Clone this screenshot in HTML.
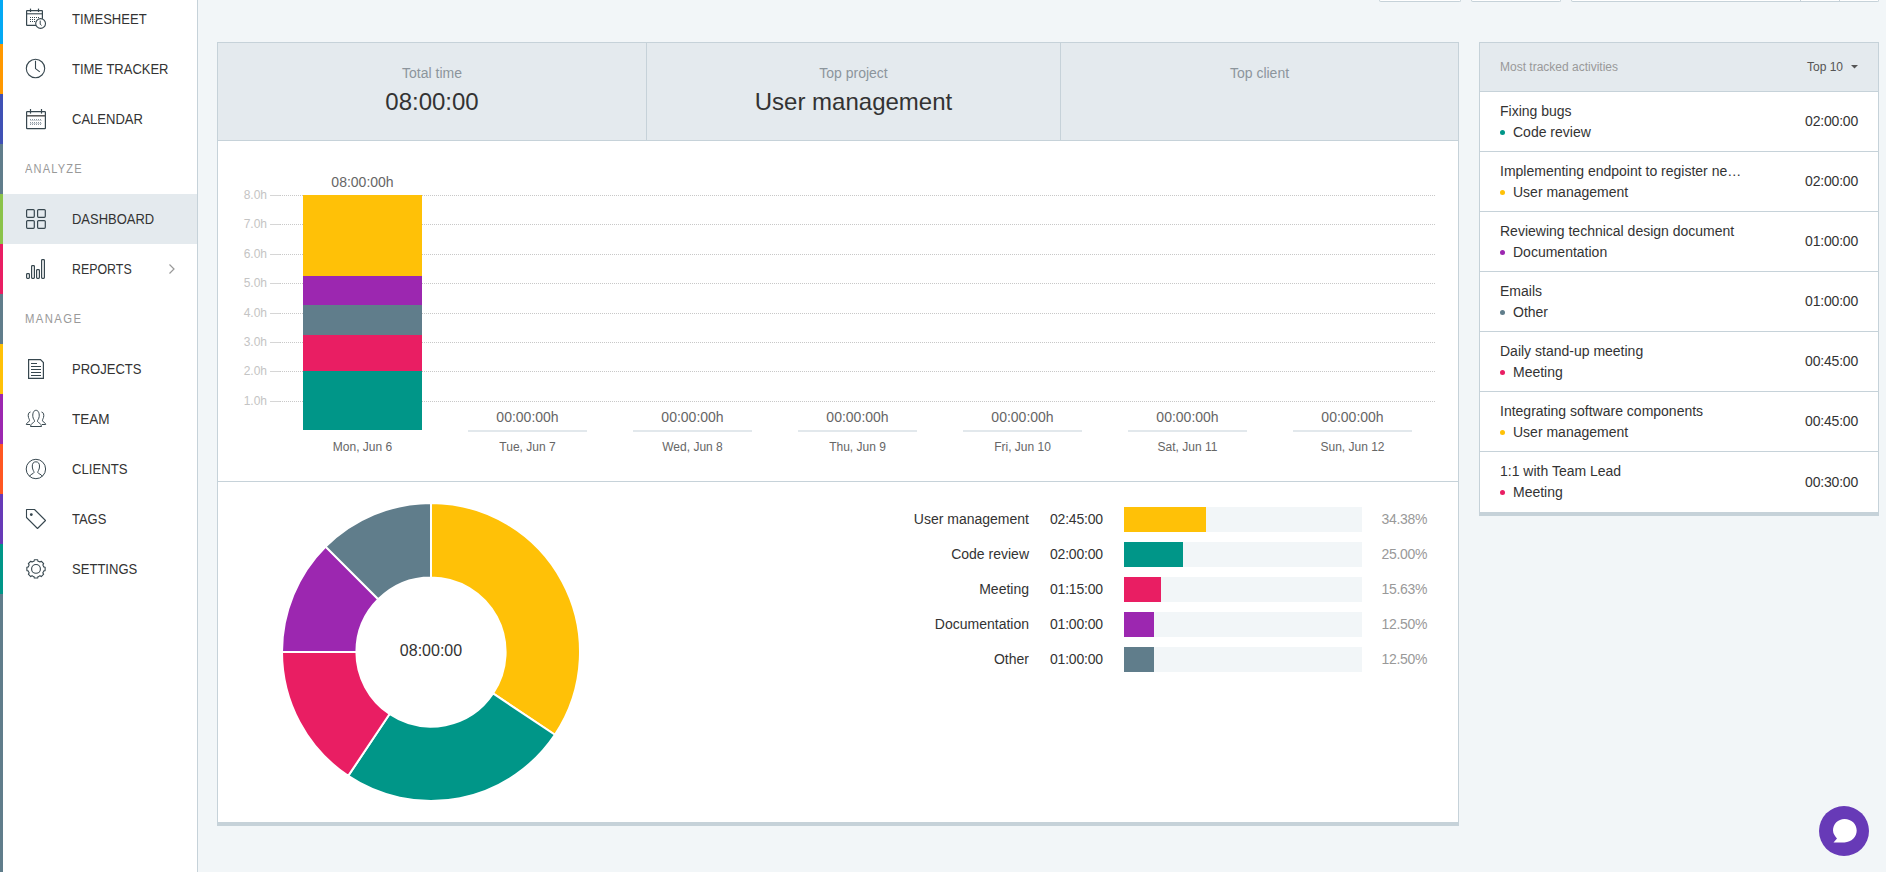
<!DOCTYPE html>
<html><head><meta charset="utf-8"><style>
html,body{margin:0;padding:0;width:1886px;height:872px;overflow:hidden;position:relative;font-family:"Liberation Sans", sans-serif;}
.t{position:absolute;white-space:nowrap;font-family:"Liberation Sans", sans-serif;}
.r{position:absolute;}
</style></head><body>
<div class="r" style="left:0px;top:0px;width:1886px;height:872px;background:#f2f6f8;"></div>
<div class="r" style="left:0px;top:0px;width:197px;height:872px;background:#fff;"></div>
<div class="r" style="left:197px;top:0px;width:1px;height:872px;background:#c6d2d9;"></div>
<div class="r" style="left:0px;top:0px;width:3px;height:44px;background:#03a9f4;"></div>
<div class="r" style="left:0px;top:44px;width:3px;height:50px;background:#ff9800;"></div>
<div class="r" style="left:0px;top:94px;width:3px;height:50px;background:#3f51b5;"></div>
<div class="r" style="left:0px;top:144px;width:3px;height:50px;background:#607d8b;"></div>
<div class="r" style="left:0px;top:194px;width:3px;height:50px;background:#8bc34a;"></div>
<div class="r" style="left:0px;top:244px;width:3px;height:50px;background:#e91e63;"></div>
<div class="r" style="left:0px;top:294px;width:3px;height:50px;background:#607d8b;"></div>
<div class="r" style="left:0px;top:344px;width:3px;height:50px;background:#ffc107;"></div>
<div class="r" style="left:0px;top:394px;width:3px;height:50px;background:#9c27b0;"></div>
<div class="r" style="left:0px;top:444px;width:3px;height:50px;background:#ff5722;"></div>
<div class="r" style="left:0px;top:494px;width:3px;height:50px;background:#673ab7;"></div>
<div class="r" style="left:0px;top:544px;width:3px;height:50px;background:#009688;"></div>
<div class="r" style="left:0px;top:594px;width:3px;height:278px;background:#607d8b;"></div>
<div class="r" style="left:3px;top:194px;width:194px;height:50px;background:#e4eaee;"></div>
<div class="t" style="left:72px;top:12px;font-size:14px;line-height:14px;color:#333;transform:scaleX(0.932);transform-origin:0 0">TIMESHEET</div>
<div class="t" style="left:72px;top:62px;font-size:14px;line-height:14px;color:#333;transform:scaleX(0.928);transform-origin:0 0">TIME TRACKER</div>
<div class="t" style="left:72px;top:112px;font-size:14px;line-height:14px;color:#333;transform:scaleX(0.931);transform-origin:0 0">CALENDAR</div>
<div class="t" style="left:72px;top:212px;font-size:14px;line-height:14px;color:#333;transform:scaleX(0.926);transform-origin:0 0">DASHBOARD</div>
<div class="t" style="left:72px;top:262px;font-size:14px;line-height:14px;color:#333;transform:scaleX(0.885);transform-origin:0 0">REPORTS</div>
<div class="t" style="left:72px;top:362px;font-size:14px;line-height:14px;color:#333;transform:scaleX(0.93);transform-origin:0 0">PROJECTS</div>
<div class="t" style="left:72px;top:412px;font-size:14px;line-height:14px;color:#333;transform:scaleX(0.968);transform-origin:0 0">TEAM</div>
<div class="t" style="left:72px;top:462px;font-size:14px;line-height:14px;color:#333;transform:scaleX(0.938);transform-origin:0 0">CLIENTS</div>
<div class="t" style="left:72px;top:512px;font-size:14px;line-height:14px;color:#333;transform:scaleX(0.924);transform-origin:0 0">TAGS</div>
<div class="t" style="left:72px;top:562px;font-size:14px;line-height:14px;color:#333;transform:scaleX(0.932);transform-origin:0 0">SETTINGS</div>
<div class="t" style="left:25px;top:163px;font-size:12px;line-height:12px;color:#999;letter-spacing:1.3px;transform:scaleX(0.92);transform-origin:0 0">ANALYZE</div>
<div class="t" style="left:25px;top:313px;font-size:12px;line-height:12px;color:#999;letter-spacing:1.5px;transform:scaleX(0.94);transform-origin:0 0">MANAGE</div>
<svg class="r" style="left:0;top:0" width="197" height="600" viewBox="0 0 197 600" fill="none" stroke="#37474f" stroke-width="1.2">
<rect x="26.6" y="10.6" width="15.8" height="14.8" rx="0.5"/>
<line x1="26.6" y1="13.8" x2="42.4" y2="13.8" stroke-width="1.1"/>
<line x1="30.5" y1="8.6" x2="30.5" y2="12"/><line x1="38.5" y1="8.6" x2="38.5" y2="12"/>
<g fill="#37474f" stroke="none"><rect x="30" y="17" width="1" height="1"/><rect x="32" y="17" width="1" height="1"/><rect x="34" y="17" width="1" height="1"/><rect x="36" y="17" width="1" height="1"/><rect x="38" y="17" width="1" height="1"/><rect x="30" y="19" width="1" height="1"/><rect x="32" y="19" width="1" height="1"/><rect x="34" y="19" width="1" height="1"/><rect x="30" y="21" width="1" height="1"/><rect x="32" y="21" width="1" height="1"/><rect x="34" y="21" width="1" height="1"/></g>
<circle cx="40.6" cy="23.5" r="4.9" fill="#fff" stroke-width="1.1"/>
<path d="M40.2 20.6 V24.2 L41.6 25.4" stroke-width="1"/>
<circle cx="35.5" cy="68.5" r="9.2" stroke-width="1.1"/>
<path d="M35.5 60.8 V68.6 L39.8 71.9" stroke-width="1.1"/>
<rect x="26.6" y="111.6" width="18.8" height="17" rx="0.6"/>
<line x1="26.6" y1="115.8" x2="45.4" y2="115.8" stroke-width="1.5" stroke="#555"/>
<line x1="30.5" y1="109" x2="30.5" y2="113.6"/><line x1="41.5" y1="109" x2="41.5" y2="113.6"/>
<g fill="#8a96a0" stroke="none"><rect x="30" y="119" width="1" height="1"/><rect x="32" y="119" width="1" height="1"/><rect x="34" y="119" width="1" height="1"/><rect x="36" y="119" width="1" height="1"/><rect x="38" y="119" width="1" height="1"/><rect x="40" y="119" width="1" height="1"/><rect x="30" y="122" width="1" height="1"/><rect x="32" y="122" width="1" height="1"/><rect x="34" y="122" width="1" height="1"/><rect x="36" y="122" width="1" height="1"/><rect x="38" y="122" width="1" height="1"/><rect x="40" y="122" width="1" height="1"/><rect x="30" y="124" width="1" height="1"/><rect x="32" y="124" width="1" height="1"/><rect x="34" y="124" width="1" height="1"/><rect x="36" y="124" width="1" height="1"/><rect x="38" y="124" width="1" height="1"/><rect x="40" y="124" width="1" height="1"/><rect x="30" y="120" width="12" height="1" opacity="0.4"/><rect x="30" y="123" width="12" height="1" opacity="0.4"/></g>
<g stroke-width="1.2"><rect x="26.6" y="209.6" width="7.7" height="7.7" rx="1"/><rect x="37.6" y="209.6" width="7.7" height="7.7" rx="1"/>
<rect x="26.6" y="220.6" width="7.7" height="7.7" rx="1"/><rect x="37.6" y="220.6" width="7.7" height="7.7" rx="1"/></g>
<g stroke-width="1.2"><rect x="26.6" y="273.6" width="2.8" height="4.8" rx="0.8"/><rect x="31.6" y="265.6" width="2.8" height="12.8" rx="0.8"/><rect x="36.6" y="269.6" width="2.8" height="8.8" rx="0.8"/><rect x="41.6" y="259.6" width="2.8" height="18.8" rx="0.8"/></g>
<path d="M169.5 264.5 L174 269 L169.5 273.5" stroke="#999" stroke-width="1.2"/>
<path d="M28.6 359.6 H40.5 L43.4 362.5 V378.4 H28.6 Z" stroke-width="1.2"/>
<g stroke-width="1"><line x1="31" y1="363.5" x2="37" y2="363.5"/><line x1="31" y1="366.5" x2="41" y2="366.5"/><line x1="31" y1="369.5" x2="41" y2="369.5"/><line x1="31" y1="372.5" x2="41" y2="372.5"/><line x1="31" y1="375.5" x2="41" y2="375.5"/></g>
<g stroke-width="1">
<path d="M30.5 426.5 C30.5 423.5 34 422.5 34.5 421.5 C35 420.5 33 419 32.8 416.5 C32.5 412.5 34 410.3 36 410.3 C38 410.3 39.5 412.5 39.2 416.5 C39 419 37 420.5 37.5 421.5 C38 422.5 41.5 423.5 41.5 426.5 Z"/>
<path d="M30.5 412 C28.3 412.3 27.8 415 28.5 417.5 C29 419 29.8 420 29.5 421 C29 422 26.5 422.5 26.3 424.5 L30 424.5"/>
<path d="M41.5 412 C43.7 412.3 44.2 415 43.5 417.5 C43 419 42.2 420 42.5 421 C43 422 45.5 422.5 45.7 424.5 L42 424.5"/>
</g>
<g stroke-width="1"><circle cx="35.9" cy="469" r="9.7"/>
<path d="M29.5 476.3 C30.5 474 33.5 474 34 472.5 C34.3 471.5 32.5 470 32.3 467 C32 463.5 33.5 461.8 35.9 461.8 C38.3 461.8 39.8 463.5 39.5 467 C39.3 470 37.5 471.5 37.8 472.5 C38.3 474 41.3 474 42.3 476.3"/></g>
<g stroke-width="1.1"><path d="M26.5 509.5 H34.5 L45.5 520.5 L37.5 528.5 L26.5 517.5 Z" stroke-linejoin="round"/><circle cx="31.3" cy="514.6" r="0.9" fill="#37474f"/></g>
<g stroke-width="1.1"><circle cx="36" cy="568.9" r="4.4"/>
<path d="M32.98 561.60 L33.96 561.27 L34.31 559.76 L37.69 559.76 L38.04 561.27 L39.02 561.60 L39.95 562.06 L41.27 561.24 L43.66 563.63 L42.84 564.95 L43.30 565.88 L43.63 566.86 L45.14 567.21 L45.14 570.59 L43.63 570.94 L43.30 571.92 L42.84 572.85 L43.66 574.17 L41.27 576.56 L39.95 575.74 L39.02 576.20 L38.04 576.53 L37.69 578.04 L34.31 578.04 L33.96 576.53 L32.98 576.20 L32.05 575.74 L30.73 576.56 L28.34 574.17 L29.16 572.85 L28.70 571.92 L28.37 570.94 L26.86 570.59 L26.86 567.21 L28.37 566.86 L28.70 565.88 L29.16 564.95 L28.34 563.63 L30.73 561.24 L32.05 562.06 Z" stroke-linejoin="round"/></g>
</svg>
<div class="r" style="left:1379px;top:-3px;width:82px;height:5px;background:#fff;border:1px solid #c6d2d9;border-top:none;border-radius:0 0 2px 2px;box-sizing:border-box"></div>
<div class="r" style="left:1471px;top:-3px;width:90px;height:5px;background:#fff;border:1px solid #c6d2d9;border-top:none;border-radius:0 0 2px 2px;box-sizing:border-box"></div>
<div class="r" style="left:1571px;top:-3px;width:308px;height:5px;background:#fff;border:1px solid #c6d2d9;border-top:none;border-radius:0 0 2px 2px;box-sizing:border-box"></div>
<div class="r" style="left:1800px;top:0px;width:1px;height:2px;background:#c6d2d9;"></div>
<div class="r" style="left:1839px;top:0px;width:1px;height:2px;background:#c6d2d9;"></div>
<div class="r" style="left:217px;top:42px;width:1242px;height:784px;background:#fff;border:1px solid #c6d2d9;border-bottom:4px solid #c6d2d9;box-sizing:border-box"></div>
<div class="r" style="left:218px;top:43px;width:1240px;height:97px;background:#e4eaee;"></div>
<div class="r" style="left:218px;top:140px;width:1240px;height:1px;background:#c6d2d9;"></div>
<div class="r" style="left:646px;top:43px;width:1px;height:97px;background:#c6d2d9;"></div>
<div class="r" style="left:1060px;top:43px;width:1px;height:97px;background:#c6d2d9;"></div>
<div class="t" style="left:132px;width:600px;top:66px;font-size:14px;line-height:14px;color:#8c959c;text-align:center;">Total time</div>
<div class="t" style="left:132px;width:600px;top:90px;font-size:24px;line-height:24px;color:#333;text-align:center;">08:00:00</div>
<div class="t" style="left:553.5px;width:600px;top:66px;font-size:14px;line-height:14px;color:#8c959c;text-align:center;">Top project</div>
<div class="t" style="left:553.5px;width:600px;top:90px;font-size:24px;line-height:24px;color:#333;text-align:center;">User management</div>
<div class="t" style="left:959.5px;width:600px;top:66px;font-size:14px;line-height:14px;color:#8c959c;text-align:center;">Top client</div>
<div class="r" style="left:270px;top:401px;width:10px;height:1px;background:#d6d6d6;"></div>
<div class="r" style="left:280px;top:401px;width:1155px;height:1px;background:repeating-linear-gradient(90deg,#c8c8c8 0 1px,transparent 1px 2px)"></div>
<div class="t" style="right:1619px;top:395px;font-size:12px;line-height:12px;color:#c4c4c4;text-align:right;">1.0h</div>
<div class="r" style="left:270px;top:371px;width:10px;height:1px;background:#d6d6d6;"></div>
<div class="r" style="left:280px;top:371px;width:1155px;height:1px;background:repeating-linear-gradient(90deg,#c8c8c8 0 1px,transparent 1px 2px)"></div>
<div class="t" style="right:1619px;top:365px;font-size:12px;line-height:12px;color:#c4c4c4;text-align:right;">2.0h</div>
<div class="r" style="left:270px;top:342px;width:10px;height:1px;background:#d6d6d6;"></div>
<div class="r" style="left:280px;top:342px;width:1155px;height:1px;background:repeating-linear-gradient(90deg,#c8c8c8 0 1px,transparent 1px 2px)"></div>
<div class="t" style="right:1619px;top:336px;font-size:12px;line-height:12px;color:#c4c4c4;text-align:right;">3.0h</div>
<div class="r" style="left:270px;top:313px;width:10px;height:1px;background:#d6d6d6;"></div>
<div class="r" style="left:280px;top:313px;width:1155px;height:1px;background:repeating-linear-gradient(90deg,#c8c8c8 0 1px,transparent 1px 2px)"></div>
<div class="t" style="right:1619px;top:307px;font-size:12px;line-height:12px;color:#c4c4c4;text-align:right;">4.0h</div>
<div class="r" style="left:270px;top:283px;width:10px;height:1px;background:#d6d6d6;"></div>
<div class="r" style="left:280px;top:283px;width:1155px;height:1px;background:repeating-linear-gradient(90deg,#c8c8c8 0 1px,transparent 1px 2px)"></div>
<div class="t" style="right:1619px;top:277px;font-size:12px;line-height:12px;color:#c4c4c4;text-align:right;">5.0h</div>
<div class="r" style="left:270px;top:254px;width:10px;height:1px;background:#d6d6d6;"></div>
<div class="r" style="left:280px;top:254px;width:1155px;height:1px;background:repeating-linear-gradient(90deg,#c8c8c8 0 1px,transparent 1px 2px)"></div>
<div class="t" style="right:1619px;top:248px;font-size:12px;line-height:12px;color:#c4c4c4;text-align:right;">6.0h</div>
<div class="r" style="left:270px;top:224px;width:10px;height:1px;background:#d6d6d6;"></div>
<div class="r" style="left:280px;top:224px;width:1155px;height:1px;background:repeating-linear-gradient(90deg,#c8c8c8 0 1px,transparent 1px 2px)"></div>
<div class="t" style="right:1619px;top:218px;font-size:12px;line-height:12px;color:#c4c4c4;text-align:right;">7.0h</div>
<div class="r" style="left:270px;top:195px;width:10px;height:1px;background:#d6d6d6;"></div>
<div class="r" style="left:280px;top:195px;width:1155px;height:1px;background:repeating-linear-gradient(90deg,#c8c8c8 0 1px,transparent 1px 2px)"></div>
<div class="t" style="right:1619px;top:189px;font-size:12px;line-height:12px;color:#c4c4c4;text-align:right;">8.0h</div>
<div class="r" style="left:303px;top:195px;width:119px;height:81px;background:#ffc107;"></div>
<div class="r" style="left:303px;top:276px;width:119px;height:29px;background:#9c27b0;"></div>
<div class="r" style="left:303px;top:305px;width:119px;height:30px;background:#607d8b;"></div>
<div class="r" style="left:303px;top:335px;width:119px;height:36px;background:#e91e63;"></div>
<div class="r" style="left:303px;top:371px;width:119px;height:59px;background:#009688;"></div>
<div class="t" style="left:62.5px;width:600px;top:441px;font-size:12px;line-height:12px;color:#666;text-align:center;">Mon, Jun 6</div>
<div class="t" style="left:62.5px;width:600px;top:175px;font-size:14px;line-height:14px;color:#666;text-align:center;">08:00:00h</div>
<div class="t" style="left:227.5px;width:600px;top:441px;font-size:12px;line-height:12px;color:#666;text-align:center;">Tue, Jun 7</div>
<div class="t" style="left:227.5px;width:600px;top:410px;font-size:14px;line-height:14px;color:#666;text-align:center;">00:00:00h</div>
<div class="r" style="left:468px;top:430px;width:119px;height:2px;background:#e2e8ec;"></div>
<div class="t" style="left:392.5px;width:600px;top:441px;font-size:12px;line-height:12px;color:#666;text-align:center;">Wed, Jun 8</div>
<div class="t" style="left:392.5px;width:600px;top:410px;font-size:14px;line-height:14px;color:#666;text-align:center;">00:00:00h</div>
<div class="r" style="left:633px;top:430px;width:119px;height:2px;background:#e2e8ec;"></div>
<div class="t" style="left:557.5px;width:600px;top:441px;font-size:12px;line-height:12px;color:#666;text-align:center;">Thu, Jun 9</div>
<div class="t" style="left:557.5px;width:600px;top:410px;font-size:14px;line-height:14px;color:#666;text-align:center;">00:00:00h</div>
<div class="r" style="left:798px;top:430px;width:119px;height:2px;background:#e2e8ec;"></div>
<div class="t" style="left:722.5px;width:600px;top:441px;font-size:12px;line-height:12px;color:#666;text-align:center;">Fri, Jun 10</div>
<div class="t" style="left:722.5px;width:600px;top:410px;font-size:14px;line-height:14px;color:#666;text-align:center;">00:00:00h</div>
<div class="r" style="left:963px;top:430px;width:119px;height:2px;background:#e2e8ec;"></div>
<div class="t" style="left:887.5px;width:600px;top:441px;font-size:12px;line-height:12px;color:#666;text-align:center;">Sat, Jun 11</div>
<div class="t" style="left:887.5px;width:600px;top:410px;font-size:14px;line-height:14px;color:#666;text-align:center;">00:00:00h</div>
<div class="r" style="left:1128px;top:430px;width:119px;height:2px;background:#e2e8ec;"></div>
<div class="t" style="left:1052.5px;width:600px;top:441px;font-size:12px;line-height:12px;color:#666;text-align:center;">Sun, Jun 12</div>
<div class="t" style="left:1052.5px;width:600px;top:410px;font-size:14px;line-height:14px;color:#666;text-align:center;">00:00:00h</div>
<div class="r" style="left:1293px;top:430px;width:119px;height:2px;background:#e2e8ec;"></div>
<div class="r" style="left:218px;top:481px;width:1240px;height:1px;background:#c6d2d9;"></div>
<svg class="r" style="left:0;top:0" width="1886" height="872"><path d="M431.00 503.00 A149 149 0 0 1 554.89 734.78 L493.03 693.45 A74.6 74.6 0 0 0 431.00 577.40 Z" fill="#ffc107" stroke="#fff" stroke-width="2"/><path d="M554.89 734.78 A149 149 0 0 1 348.22 775.89 L389.55 714.03 A74.6 74.6 0 0 0 493.03 693.45 Z" fill="#009688" stroke="#fff" stroke-width="2"/><path d="M348.22 775.89 A149 149 0 0 1 282.00 652.00 L356.40 652.00 A74.6 74.6 0 0 0 389.55 714.03 Z" fill="#e91e63" stroke="#fff" stroke-width="2"/><path d="M282.00 652.00 A149 149 0 0 1 325.64 546.64 L378.25 599.25 A74.6 74.6 0 0 0 356.40 652.00 Z" fill="#9c27b0" stroke="#fff" stroke-width="2"/><path d="M325.64 546.64 A149 149 0 0 1 431.00 503.00 L431.00 577.40 A74.6 74.6 0 0 0 378.25 599.25 Z" fill="#607d8b" stroke="#fff" stroke-width="2"/></svg>
<div class="t" style="left:131px;width:600px;top:643px;font-size:16px;line-height:16px;color:#333;text-align:center;">08:00:00</div>
<div class="t" style="right:857px;top:512px;font-size:14px;line-height:14px;color:#333;text-align:right;">User management</div>
<div class="t" style="left:1050px;top:512px;font-size:14px;line-height:14px;color:#333;letter-spacing:-0.2px">02:45:00</div>
<div class="r" style="left:1124px;top:507px;width:238px;height:25px;background:#f2f6f8;"></div>
<div class="r" style="left:1124px;top:507px;width:82px;height:25px;background:#ffc107;"></div>
<div class="t" style="right:459px;top:512px;font-size:14px;line-height:14px;color:#999;text-align:right;letter-spacing:-0.35px">34.38%</div>
<div class="t" style="right:857px;top:547px;font-size:14px;line-height:14px;color:#333;text-align:right;">Code review</div>
<div class="t" style="left:1050px;top:547px;font-size:14px;line-height:14px;color:#333;letter-spacing:-0.2px">02:00:00</div>
<div class="r" style="left:1124px;top:542px;width:238px;height:25px;background:#f2f6f8;"></div>
<div class="r" style="left:1124px;top:542px;width:59px;height:25px;background:#009688;"></div>
<div class="t" style="right:459px;top:547px;font-size:14px;line-height:14px;color:#999;text-align:right;letter-spacing:-0.35px">25.00%</div>
<div class="t" style="right:857px;top:582px;font-size:14px;line-height:14px;color:#333;text-align:right;">Meeting</div>
<div class="t" style="left:1050px;top:582px;font-size:14px;line-height:14px;color:#333;letter-spacing:-0.2px">01:15:00</div>
<div class="r" style="left:1124px;top:577px;width:238px;height:25px;background:#f2f6f8;"></div>
<div class="r" style="left:1124px;top:577px;width:37px;height:25px;background:#e91e63;"></div>
<div class="t" style="right:459px;top:582px;font-size:14px;line-height:14px;color:#999;text-align:right;letter-spacing:-0.35px">15.63%</div>
<div class="t" style="right:857px;top:617px;font-size:14px;line-height:14px;color:#333;text-align:right;">Documentation</div>
<div class="t" style="left:1050px;top:617px;font-size:14px;line-height:14px;color:#333;letter-spacing:-0.2px">01:00:00</div>
<div class="r" style="left:1124px;top:612px;width:238px;height:25px;background:#f2f6f8;"></div>
<div class="r" style="left:1124px;top:612px;width:30px;height:25px;background:#9c27b0;"></div>
<div class="t" style="right:459px;top:617px;font-size:14px;line-height:14px;color:#999;text-align:right;letter-spacing:-0.35px">12.50%</div>
<div class="t" style="right:857px;top:652px;font-size:14px;line-height:14px;color:#333;text-align:right;">Other</div>
<div class="t" style="left:1050px;top:652px;font-size:14px;line-height:14px;color:#333;letter-spacing:-0.2px">01:00:00</div>
<div class="r" style="left:1124px;top:647px;width:238px;height:25px;background:#f2f6f8;"></div>
<div class="r" style="left:1124px;top:647px;width:30px;height:25px;background:#607d8b;"></div>
<div class="t" style="right:459px;top:652px;font-size:14px;line-height:14px;color:#999;text-align:right;letter-spacing:-0.35px">12.50%</div>
<div class="r" style="left:1479px;top:42px;width:400px;height:474px;background:#fff;border:1px solid #c6d2d9;border-bottom:4px solid #c6d2d9;box-sizing:border-box"></div>
<div class="r" style="left:1480px;top:43px;width:398px;height:48px;background:#e4eaee;"></div>
<div class="r" style="left:1480px;top:91px;width:398px;height:1px;background:#c6d2d9;"></div>
<div class="t" style="left:1500px;top:61px;font-size:12px;line-height:12px;color:#999;">Most tracked activities</div>
<div class="t" style="left:1807px;top:61px;font-size:12px;line-height:12px;color:#555;">Top 10</div>
<svg class="r" style="left:1851px;top:65px" width="8" height="4"><path d="M0 0 H7 L3.5 3.5 Z" fill="#555"/></svg>
<div class="t" style="left:1500px;top:104px;font-size:14px;line-height:14px;color:#333;">Fixing bugs</div>
<div class="t" style="left:1513px;top:125px;font-size:14px;line-height:14px;color:#333;">Code review</div>
<div class="r" style="left:1500px;top:130px;width:5px;height:5px;border-radius:50%;background:#009688"></div>
<div class="t" style="right:28px;top:114px;font-size:14px;line-height:14px;color:#333;text-align:right;letter-spacing:-0.2px">02:00:00</div>
<div class="r" style="left:1480px;top:151px;width:398px;height:1px;background:#c6d2d9;"></div>
<div class="t" style="left:1500px;top:164px;font-size:14px;line-height:14px;color:#333;">Implementing endpoint to register ne…</div>
<div class="t" style="left:1513px;top:185px;font-size:14px;line-height:14px;color:#333;">User management</div>
<div class="r" style="left:1500px;top:190px;width:5px;height:5px;border-radius:50%;background:#ffc107"></div>
<div class="t" style="right:28px;top:174px;font-size:14px;line-height:14px;color:#333;text-align:right;letter-spacing:-0.2px">02:00:00</div>
<div class="r" style="left:1480px;top:211px;width:398px;height:1px;background:#c6d2d9;"></div>
<div class="t" style="left:1500px;top:224px;font-size:14px;line-height:14px;color:#333;">Reviewing technical design document</div>
<div class="t" style="left:1513px;top:245px;font-size:14px;line-height:14px;color:#333;">Documentation</div>
<div class="r" style="left:1500px;top:250px;width:5px;height:5px;border-radius:50%;background:#9c27b0"></div>
<div class="t" style="right:28px;top:234px;font-size:14px;line-height:14px;color:#333;text-align:right;letter-spacing:-0.2px">01:00:00</div>
<div class="r" style="left:1480px;top:271px;width:398px;height:1px;background:#c6d2d9;"></div>
<div class="t" style="left:1500px;top:284px;font-size:14px;line-height:14px;color:#333;">Emails</div>
<div class="t" style="left:1513px;top:305px;font-size:14px;line-height:14px;color:#333;">Other</div>
<div class="r" style="left:1500px;top:310px;width:5px;height:5px;border-radius:50%;background:#607d8b"></div>
<div class="t" style="right:28px;top:294px;font-size:14px;line-height:14px;color:#333;text-align:right;letter-spacing:-0.2px">01:00:00</div>
<div class="r" style="left:1480px;top:331px;width:398px;height:1px;background:#c6d2d9;"></div>
<div class="t" style="left:1500px;top:344px;font-size:14px;line-height:14px;color:#333;">Daily stand-up meeting</div>
<div class="t" style="left:1513px;top:365px;font-size:14px;line-height:14px;color:#333;">Meeting</div>
<div class="r" style="left:1500px;top:370px;width:5px;height:5px;border-radius:50%;background:#e91e63"></div>
<div class="t" style="right:28px;top:354px;font-size:14px;line-height:14px;color:#333;text-align:right;letter-spacing:-0.2px">00:45:00</div>
<div class="r" style="left:1480px;top:391px;width:398px;height:1px;background:#c6d2d9;"></div>
<div class="t" style="left:1500px;top:404px;font-size:14px;line-height:14px;color:#333;">Integrating software components</div>
<div class="t" style="left:1513px;top:425px;font-size:14px;line-height:14px;color:#333;">User management</div>
<div class="r" style="left:1500px;top:430px;width:5px;height:5px;border-radius:50%;background:#ffc107"></div>
<div class="t" style="right:28px;top:414px;font-size:14px;line-height:14px;color:#333;text-align:right;letter-spacing:-0.2px">00:45:00</div>
<div class="r" style="left:1480px;top:451px;width:398px;height:1px;background:#c6d2d9;"></div>
<div class="t" style="left:1500px;top:464px;font-size:14px;line-height:14px;color:#333;">1:1 with Team Lead</div>
<div class="t" style="left:1513px;top:485px;font-size:14px;line-height:14px;color:#333;">Meeting</div>
<div class="r" style="left:1500px;top:490px;width:5px;height:5px;border-radius:50%;background:#e91e63"></div>
<div class="t" style="right:28px;top:475px;font-size:14px;line-height:14px;color:#333;text-align:right;letter-spacing:-0.2px">00:30:00</div>
<svg class="r" style="left:1819px;top:806px" width="50" height="50" viewBox="0 0 50 50"><circle cx="25" cy="25" r="25" fill="#673ab7"/><path d="M14.5 36.5 L18 32.5 C16.5 30.5 14 28 14 24.5 C14 18 19 13 25.5 13 C32.5 13 37.7 18 37.7 24.5 C37.7 31 32.5 36 25.5 36.5 Z" fill="#fff"/></svg>
</body></html>
